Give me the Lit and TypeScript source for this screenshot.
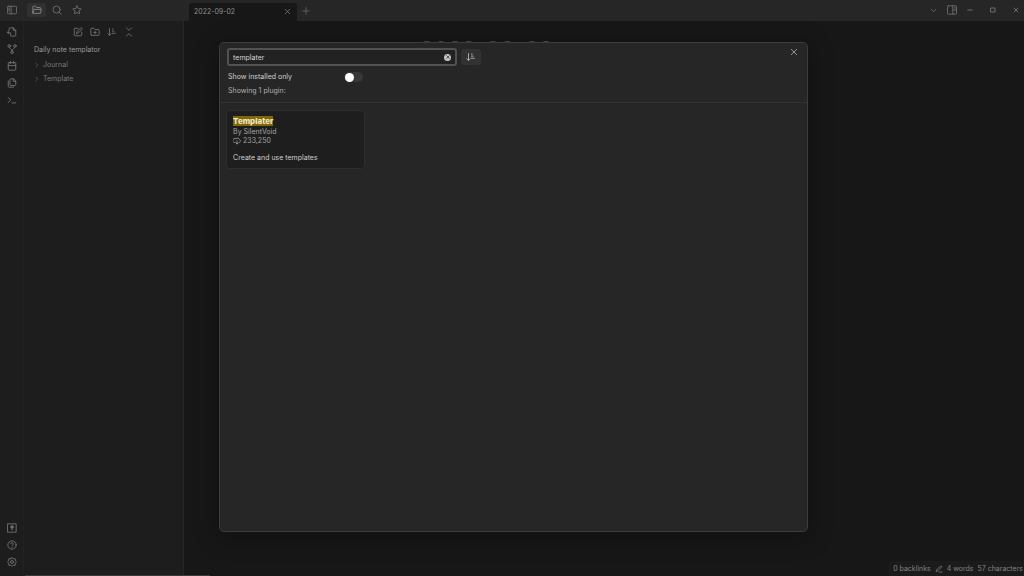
import { LitElement, html, css, svg } from "lit";
import { customElement, property, state } from "lit/decorators.js";

const ICONS: Record<string, unknown> = {
  sidebarLeft: svg`<rect x="1" y="3" width="22" height="18" rx="2"/><path d="M10 3v18M4 7.500h2.500M4 11h2.500M4 14.500h2.500"/>`,
  sidebarRight: svg`<rect x="1" y="2" width="22" height="20" rx="2"/><path d="M14 2v20M14 12h9M17.500 7h2.500"/>`,
  folder: svg`<path d="M2 19V5a2 2 0 0 1 2-2h5l2 3h8a2 2 0 0 1 2 2v2M2 19l3-8.500h17.500L20 20H3a1 1 0 0 1-1-1z"/>`,
  search: svg`<circle cx="11" cy="11" r="8.500"/><path d="m22 22-5-5"/>`,
  star: svg`<path d="m12 2 3.100 6.300 6.900 1-5 4.900 1.200 6.800-6.200-3.200L5.800 21 7 14.200 2 9.300l6.900-1z"/>`,
  edit: svg`<path d="M12 3H5a2 2 0 0 0-2 2v14a2 2 0 0 0 2 2h14a2 2 0 0 0 2-2v-7"/><path d="M18.400 2.600a2.100 2.100 0 0 1 3 3L12.500 14.500 8 16l1.500-4.500z"/>`,
  folderPlus: svg`<path d="M4 20h16a2 2 0 0 0 2-2V8a2 2 0 0 0-2-2h-8l-2.500-3H4a2 2 0 0 0-2 2v13a2 2 0 0 0 2 2zM12 10v6M9 13h6"/>`,
  sort: svg`<path d="M6 4v16M2 16l4 4 4-4M13 5h2M13 10h4M13 15h7"/>`,
  collapse: svg`<path d="m6 2 6 6 6-6M6 22l6-6 6 6"/>`,
  fileSearch: svg`<path d="M5 8V4a2 2 0 0 1 2-2h8l6 6v12a2 2 0 0 1-2 2h-7M15 2v6h6"/><path d="M9 22v-5a4 4 0 0 0-4-4H1M4 9.500 1 13l3 3.500"/>`,
  graph: svg`<circle cx="5" cy="4.500" r="3"/><circle cx="19" cy="4.500" r="3"/><circle cx="12" cy="20" r="3"/><path d="M5 8c0 4 7 3 7 8M19 8c0 4-7 3-7 8M8 4.500h2"/>`,
  calendar: svg`<rect x="3" y="4" width="18" height="18" rx="2"/><path d="M16 1v5M8 1v5M3 11h18"/>`,
  copy: svg`<path d="M15 2H9a2 2 0 0 0-2 2v12a2 2 0 0 0 2 2h10a2 2 0 0 0 2-2V8zM15 2v6h6"/><path d="M3 7v13a2 2 0 0 0 2 2h11"/>`,
  terminal: svg`<path d="m3 18 6-6-6-6M12 19h9"/>`,
  vault: svg`<rect x="2" y="2" width="20" height="20"/><circle cx="12" cy="9.500" r="3" fill="currentColor"/><path d="M12 12v5"/>`,
  help: svg`<circle cx="12" cy="12" r="10"/><path d="M9 9a3 3 0 0 1 6 1c0 2-3 2.500-3 4M12 17.500v.5"/>`,
  gear: svg`<path d="m12 1.500 3 3 4.500-.5.500 4.500 2.500 3.500-2.500 3.500-.5 4.500-4.500-.5-3 3-3-3-4.500.5-.5-4.500L1.500 12 4 8.500 4.500 4l4.500.5z"/><circle cx="12" cy="12" r="3.500"/>`,
  close: svg`<path d="M4 4l16 16M20 4 4 20"/>`,
  plus: svg`<path d="M12 2v20M2 12h20"/>`,
  chevronDown: svg`<path d="m4 8 8 8 8-8"/>`,
  chevronRight: svg`<path d="m8 5 7 7-7 7"/>`,
  minimize: svg`<path d="M3 12h18"/>`,
  maximize: svg`<rect x="4" y="4" width="16" height="16"/>`,
  pen: svg`<path d="M12 21h9M16.500 3.500a2.100 2.100 0 0 1 3 3L8 18l-5 2 1.500-5z"/>`,
  download: svg`<path d="M7 17a6.500 6.500 0 1 1 2-12A7 7 0 0 1 20 8a5 5 0 0 1-2 9"/><path d="M12 11v10M8.500 17.500 12 21l3.500-3.500"/>`,
};

@customElement("ui-icon")
class UiIcon extends LitElement {
  @property() name = "";
  static styles = css`
    :host { display: inline-flex; width: var(--icon, 10px); height: var(--icon, 10px); flex: none; }
    svg { width: 100%; height: 100%; fill: none; stroke: currentColor; stroke-width: var(--stroke, 2.2); stroke-linecap: round; stroke-linejoin: round; }
  `;
  render() {
    return html`<svg viewBox="0 0 24 24" aria-hidden="true">${ICONS[this.name]}</svg>`;
  }
}

@customElement("app-root")
class AppRoot extends LitElement {
  @state() private query = "templater";
  @state() private installedOnly = false;

  static styles = css`
    :host {
      display: flex; flex-direction: column; height: 100vh; overflow: hidden; position: relative;
      background: #171717; color: #8a8a8a;
      font: 7px/10px Inter, "Liberation Sans", sans-serif;
    }
    * { box-sizing: border-box; }
    button { display: inline-flex; align-items: center; justify-content: center; padding: 0; border: 0; background: none; color: inherit; font: inherit; }
    h1, h2, p, ul { margin: 0; padding: 0; font: inherit; list-style: none; }

    .titlebar { display: flex; flex: none; height: 21px; background: #262626; color: #6c6c6c; }
    .left-tools { display: flex; align-items: center; width: 184px; flex: none; padding: 0 2px 1px; gap: 1px; }
    .left-tools button { width: 19px; height: 14px; border-radius: 2px; }
    .left-tools .toggle-side { margin-right: 5px; }
    .left-tools .active { background: #303030; color: #858585; }
    .tab { display: flex; align-items: center; justify-content: space-between; width: 108px; margin: 3px 0 0 5px; padding: 0 5px 1px; background: #171717; color: #8c8c8c; border-radius: 3px 3px 0 0; }
    .tab button { width: 9px; height: 9px; --icon: 7px; }
    .new-tab { width: 18px; --icon: 8px; }
    .window-tools { display: flex; align-items: center; margin-left: auto; padding-bottom: 1px; }
    .window-tools button { width: 16px; height: 20px; --icon: 6px; --stroke: 4; }
    .window-tools button + .wide { margin-left: 7px; }
    .window-tools .view { width: 17px; --icon: 7px; --stroke: 3; }
    .window-tools .panel { width: 20px; --icon: 10px; --stroke: 2.2; }

    .body { display: flex; flex: 1; min-height: 0; }
    .ribbon { display: flex; flex-direction: column; width: 24px; flex: none; align-items: center; padding: 2px 0 6px; background: #1d1d1d; border-right: 1px solid #222; color: #727272; }
    .ribbon button { width: 18px; height: 17px; }
    .ribbon .bottom { margin-top: auto; }
    .sidebar { width: 160px; flex: none; background: #1d1d1d; border-right: 1px solid #272727; }
    .actions { display: flex; justify-content: center; padding: 2px 0 0; color: #707070; }
    .actions button { width: 17px; height: 17px; }
    .vault-name { padding: 5px 10px 3px; color: #9a9a9a; }
    .tree button { display: flex; justify-content: flex-start; gap: 3px; width: 100%; height: 14px; padding: 0 10px; color: #777; --icon: 6px; }
    .editor { flex: 1; min-width: 0; padding: 14px 0 0 236px; color: #4a4a4a; }
    .note-title { font-size: 22px; line-height: 28px; font-weight: 600; }

    .status { position: absolute; right: 0; bottom: 0; display: flex; align-items: center; gap: 4px; height: 15px; padding: 0 1px 0 4px; background: #1b1b1b; border-radius: 3px 0 0 0; color: #838383; --icon: 8px; }
    .scroll-edge { position: absolute; left: 25px; bottom: 0; width: 185px; height: 1px; background: #3a3a3a; }

    .overlay { position: absolute; inset: 0; display: grid; place-items: center; }
    .modal { position: relative; display: flex; flex-direction: column; width: 57.5%; height: 85%; margin-left: 3px; margin-bottom: 2px; background: #262626; border: 1px solid #3c3c3c; border-radius: 5px; box-shadow: 0 4px 24px rgba(0, 0, 0, .35); color: #d0d0d0; }
    .close { position: absolute; top: 3px; right: 7px; width: 12px; height: 12px; color: #bbb; --icon: 8px; }
    .filters { display: flex; flex-direction: column; gap: 4px; padding: 5px 7px 6px; border-bottom: 1px solid #323232; }
    .search-row { display: flex; gap: 4px; margin-bottom: 2px; }
    .search { display: flex; align-items: center; width: 230px; height: 18px; padding: 0 4px; border: 2px solid #525252; border-radius: 3px; background: #222; }
    .search input { flex: 1; min-width: 0; padding: 1px 0 0; border: 0; outline: 0; background: none; color: #d6d6d6; font: inherit; }
    .clear { width: 7px; height: 7px; border-radius: 50%; background: #c4c4c4; color: #222; --icon: 4px; --stroke: 4; }
    .sort { width: 20px; height: 16px; margin-top: 1px; border-radius: 3px; background: #323232; color: #b5b5b5; }
    .switch-row { display: flex; align-items: center; justify-content: space-between; width: 135px; margin-left: 1px; }
    .switch { appearance: none; display: flex; align-items: center; width: 19px; height: 10px; margin: 0; padding: 0 1px; border-radius: 5px; background: #383838; }
    .switch::before { content: ""; width: 9px; height: 9px; border-radius: 50%; background: #fff; }
    .switch:checked { justify-content: flex-end; background: #7f6df2; }
    .count { margin-left: 1px; color: #b0b0b0; }
    .results { display: grid; grid-template-columns: repeat(auto-fill, 139px); gap: 7px; padding: 7px 6px; }
    .card { height: 59px; padding: 5px 6px; background: #1e1e1e; border: 1px solid #2d2d2d; border-radius: 4px; color: #a4a4a4; line-height: 9px; }
    .card h2 { font-size: 8px; line-height: 10px; font-weight: 800; color: #f0e6c4; }
    .card mark { background: #806708; color: inherit; }
    .author { margin-top: 1px; }
    .downloads { display: flex; align-items: center; gap: 2px; --icon: 8px; }
    .description { margin-top: 8px; color: #cfcfcf; }
  `;

  private iconButton(name: string, label: string, cls = "") {
    return html`<button class=${cls} aria-label=${label}><ui-icon name=${name}></ui-icon></button>`;
  }

  render() {
    return html`
      <header class="titlebar">
        <nav class="left-tools">
          ${this.iconButton("sidebarLeft", "Collapse sidebar", "toggle-side")}
          ${this.iconButton("folder", "Files", "active")}
          ${this.iconButton("search", "Search")}
          ${this.iconButton("star", "Starred")}
        </nav>
        <div class="tab"><span>2022-09-02</span>${this.iconButton("close", "Close tab")}</div>
        ${this.iconButton("plus", "New tab", "new-tab")}
        <div class="window-tools">
          ${this.iconButton("chevronDown", "Tab list", "view")}
          ${this.iconButton("sidebarRight", "Expand sidebar", "panel")}
          ${this.iconButton("minimize", "Minimize")}
          ${this.iconButton("maximize", "Maximize", "wide")}
          ${this.iconButton("close", "Close window", "wide")}
        </div>
      </header>
      <div class="body">
        <nav class="ribbon">
          ${this.iconButton("fileSearch", "Quick switcher")}
          ${this.iconButton("graph", "Graph view")}
          ${this.iconButton("calendar", "Daily note")}
          ${this.iconButton("copy", "Insert template")}
          ${this.iconButton("terminal", "Command palette")}
          ${this.iconButton("vault", "Open another vault", "bottom")}
          ${this.iconButton("help", "Help")}
          ${this.iconButton("gear", "Settings")}
        </nav>
        <aside class="sidebar">
          <div class="actions">
            ${this.iconButton("edit", "New note")}
            ${this.iconButton("folderPlus", "New folder")}
            ${this.iconButton("sort", "Change sort order")}
            ${this.iconButton("collapse", "Collapse all")}
          </div>
          <p class="vault-name">Daily note templator</p>
          <ul class="tree">
            ${["Journal", "Template"].map((name) => html`<li><button><ui-icon name="chevronRight"></ui-icon>${name}</button></li>`)}
          </ul>
        </aside>
        <main class="editor"><h1 class="note-title">2022-09-02</h1></main>
      </div>
      <footer class="status"><span>0 backlinks</span><ui-icon name="pen"></ui-icon><span>4 words</span><span>57 characters</span></footer>
      <div class="scroll-edge"></div>
      <div class="overlay">
        <section class="modal" role="dialog" aria-label="Community plugins">
          ${this.iconButton("close", "Close", "close")}
          <div class="filters">
            <div class="search-row">
              <div class="search">
                <input aria-label="Search community plugins" .value=${this.query}
                  @input=${(e: Event) => (this.query = (e.target as HTMLInputElement).value)} />
                <button class="clear" aria-label="Clear search" @click=${() => (this.query = "")}><ui-icon name="close"></ui-icon></button>
              </div>
              ${this.iconButton("sort", "Sort plugins", "sort")}
            </div>
            <div class="switch-row">
              <label for="installed">Show installed only</label>
              <input id="installed" class="switch" type="checkbox" .checked=${this.installedOnly}
                @change=${(e: Event) => (this.installedOnly = (e.target as HTMLInputElement).checked)} />
            </div>
            <p class="count">Showing 1 plugin:</p>
          </div>
          <div class="results">
            <article class="card">
              <h2><mark>Templater</mark></h2>
              <p class="author">By SilentVoid</p>
              <p class="downloads"><ui-icon name="download"></ui-icon>233,250</p>
              <p class="description">Create and use templates</p>
            </article>
          </div>
        </section>
      </div>
    `;
  }
}
